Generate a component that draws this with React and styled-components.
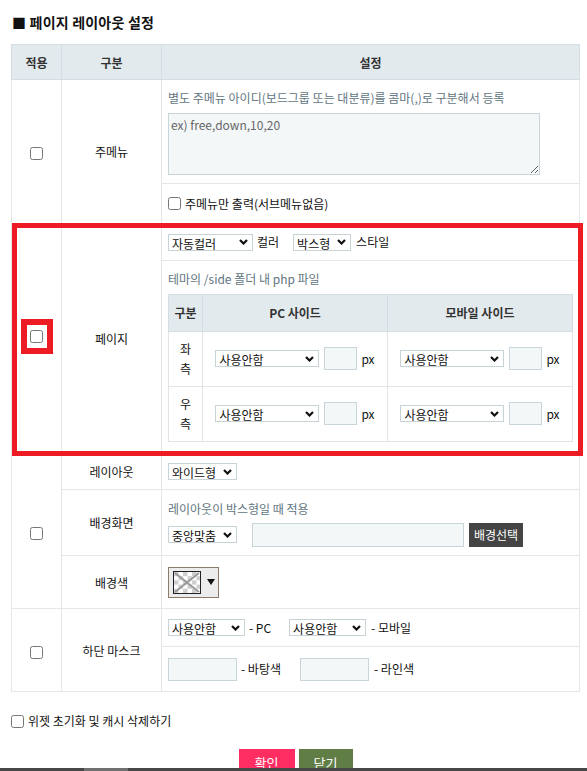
import React, { useLayoutEffect, useRef, useState } from "react";
import styled, { createGlobalStyle } from "styled-components";

const GlobalStyle = createGlobalStyle`
  html, body { margin: 0; padding: 0; background: #fff; }
  body {
    font-family: "Noto Sans CJK KR", "Noto Sans", sans-serif;
    font-size: 12px;
    color: #222;
  }
  * { box-sizing: border-box; }
`;

const Page = styled.div`
  padding: 0 7px 0 11px;
`;

const Title = styled.h2`
  margin: 0;
  padding: 12px 0 12px 1px;
  font-size: 14px;
  line-height: 20px;
  font-weight: 700;
  color: #111;
  letter-spacing: 0.2px;
`;

const TableWrap = styled.div`
  position: relative;
`;

const Table = styled.table`
  width: 100%;
  border-collapse: collapse;
  table-layout: fixed;
  border: 1px solid #e3e3e3;
`;

const Row = styled.tr`
  height: ${(p) => p.$h}px;
`;

const Th = styled.th`
  background: #e3eaee;
  border: 1px solid #d3dde2;
  font-weight: 700;
  font-size: 12px;
  color: #333;
  text-align: center;
`;

const CenterCell = styled.td`
  border: 1px solid #e6e6e6;
  text-align: center;
  vertical-align: middle;
  color: #111;
`;

const SetCell = styled.td`
  border: 1px solid #e6e6e6;
  text-align: left;
  vertical-align: middle;
  padding: 0 6px ${(p) => p.$pb || 0}px 6px;
`;

const Desc = styled.div`
  color: #5f7581;
  line-height: 20px;
  margin-bottom: ${(p) => p.$mb || 0}px;
`;

const Memo = styled.textarea`
  display: block;
  width: 372px;
  height: 62px;
  resize: vertical;
  background: #f3f7f8;
  border: 1px solid #c8d5da;
  font-family: "Noto Sans CJK KR", sans-serif;
  font-size: 12px;
  padding: 2px 2px;
  color: #555;
  outline: none;
  &::placeholder { color: #666; }
`;

const Line = styled.div`
  display: flex;
  align-items: center;
  line-height: 20px;
  color: #111;
`;

const Text = styled.span`
  margin: 0 ${(p) => p.$mr || 0}px 0 ${(p) => p.$ml || 0}px;
  white-space: nowrap;
`;

const Check = styled.input.attrs({ type: "checkbox" })`
  margin: 0;
  width: 13px;
  height: 13px;
  vertical-align: middle;
`;

const CheckLabel = styled.label`
  display: inline-flex;
  align-items: center;
  gap: 4px;
  color: #111;
  line-height: 20px;
`;

const Marked = styled.span`
  display: inline-flex;
  border: 6px solid #ed1c24;
  padding: 5px 4px 5px 3px;
  margin-bottom: 4px;
`;

const SelectBox = styled.span`
  position: relative;
  display: inline-block;
  flex: none;
  width: ${(p) => p.$w}px;
  height: 17px;
  margin-right: ${(p) => p.$mr || 0}px;
  vertical-align: middle;
`;

const SelectEl = styled.select`
  appearance: none;
  display: block;
  width: 100%;
  height: 100%;
  border: 1px solid #c8d3d8;
  border-radius: 0;
  background: #fff;
  font-family: "Noto Sans CJK KR", sans-serif;
  font-size: 12px;
  color: #111;
  padding: 0 14px 0 3px;
  outline: none;
`;

const Chevron = styled.svg`
  position: absolute;
  right: 5px;
  top: 50%;
  margin-top: -3px;
  pointer-events: none;
`;

const Select = ({ w, mr, options }) => (
  <SelectBox $w={w} $mr={mr}>
    <SelectEl defaultValue={options[0]}>
      {options.map((o) => (
        <option key={o}>{o}</option>
      ))}
    </SelectEl>
    <Chevron width="9" height="6" viewBox="0 0 9 6">
      <path d="M1 1 L4.5 4.5 L8 1" fill="none" stroke="#111" strokeWidth="2.2" />
    </Chevron>
  </SelectBox>
);

const Field = styled.input.attrs({ type: "text" })`
  flex: none;
  width: ${(p) => p.$w}px;
  height: ${(p) => p.$h || 23}px;
  margin: 0 ${(p) => p.$mr || 0}px 0 ${(p) => p.$ml || 0}px;
  background: #f3f7f8;
  border: 1px solid #c8d5da;
  outline: none;
`;

const DarkButton = styled.button`
  height: 24px;
  padding: 0 5px;
  margin-left: 5px;
  border: 0;
  background: #444;
  color: #fff;
  font-family: "Noto Sans CJK KR", sans-serif;
  font-size: 12px;
`;

const InnerTable = styled.table`
  width: 100%;
  border-collapse: collapse;
  table-layout: fixed;
`;

const InnerTh = styled.th`
  height: 37px;
  background: #e3eaee;
  border: 1px solid #d3dde2;
  font-weight: 700;
  color: #333;
  text-align: center;
`;

const InnerTd = styled.td`
  height: 55px;
  border: 1px solid #e3e3e3;
  text-align: center;
  line-height: 20px;
  color: #111;
`;

const SideBox = styled.div`
  display: inline-flex;
  align-items: center;
`;

const Picker = styled.div`
  display: inline-flex;
  align-items: center;
  width: 51px;
  height: 31px;
  padding: 0 0 0 4px;
  background: #ececec;
  border: 1px solid #8c7b6b;
  gap: 6px;
`;

const Widget = styled.div`
  margin-top: 19px;
`;

const Actions = styled.div`
  display: flex;
  justify-content: center;
  gap: 4px;
  margin-top: 18px;
`;

const ActionButton = styled.button`
  width: ${(p) => p.$w}px;
  height: 30px;
  border: 0;
  padding: 0 0 3px;
  background: ${(p) => p.$bg};
  color: #fff;
  font-family: "Noto Sans CJK KR", sans-serif;
  font-size: 13px;
`;

const Frame = styled.div`
  position: absolute;
  border: 5px solid #ed1c24;
  pointer-events: none;
`;

const BottomBar = styled.div`
  position: fixed;
  left: 0;
  right: 0;
  bottom: 0;
  height: 3px;
  background: #474747;
  &::after {
    content: "";
    position: absolute;
    left: 84px;
    width: 44px;
    top: 0;
    bottom: 0;
    background: #707070;
  }
`;

const useSel = ["사용안함", "사용함"];

export default function App() {
  const wrapRef = useRef(null);
  const groupRef = useRef(null);
  const [frame, setFrame] = useState(null);

  useLayoutEffect(() => {
    const w = wrapRef.current.getBoundingClientRect();
    const g = groupRef.current.getBoundingClientRect();
    setFrame({
      left: g.left - w.left,
      top: g.top - w.top - 1,
      width: g.width + 3,
      height: g.height + 3,
    });
  }, []);

  return (
    <Page>
      <GlobalStyle />
      <Title>■ 페이지 레이아웃 설정</Title>
      <TableWrap ref={wrapRef}>
        <Table>
          <colgroup>
            <col style={{ width: 50 }} />
            <col style={{ width: 100 }} />
            <col />
          </colgroup>
          <thead>
            <Row $h={35}>
              <Th>적용</Th>
              <Th>구분</Th>
              <Th>설정</Th>
            </Row>
          </thead>
          <tbody>
            <Row $h={104}>
              <CenterCell rowSpan={2}>
                <Check />
              </CenterCell>
              <CenterCell rowSpan={2}>주메뉴</CenterCell>
              <SetCell>
                <Desc $mb={5}>별도 주메뉴 아이디(보드그룹 또는 대분류)를 콤마(,)로 구분해서 등록</Desc>
                <Memo placeholder="ex) free,down,10,20" />
              </SetCell>
            </Row>
            <Row $h={40}>
              <SetCell>
                <CheckLabel>
                  <Check />
                  주메뉴만 출력(서브메뉴없음)
                </CheckLabel>
              </SetCell>
            </Row>
          </tbody>
          <tbody ref={groupRef}>
            <Row $h={37}>
              <CenterCell rowSpan={2}>
                <Marked>
                  <Check />
                </Marked>
              </CenterCell>
              <CenterCell rowSpan={2}>페이지</CenterCell>
              <SetCell>
                <Line>
                  <Select w={85} options={["자동컬러", "블랙", "화이트"]} />
                  <Text $ml={4} $mr={14}>컬러</Text>
                  <Select w={58} options={["박스형", "와이드형"]} />
                  <Text $ml={5}>스타일</Text>
                </Line>
              </SetCell>
            </Row>
            <Row $h={193}>
              <SetCell $pb={4}>
                <Desc $mb={5}>테마의 /side 폴더 내 php 파일</Desc>
                <InnerTable>
                  <colgroup>
                    <col style={{ width: 34 }} />
                    <col />
                    <col />
                  </colgroup>
                  <thead>
                    <tr>
                      <InnerTh>구분</InnerTh>
                      <InnerTh>PC 사이드</InnerTh>
                      <InnerTh>모바일 사이드</InnerTh>
                    </tr>
                  </thead>
                  <tbody>
                    {[["좌", "측"], ["우", "측"]].map(([a, b]) => (
                      <tr key={a}>
                        <InnerTd>
                          {a}
                          <br />
                          {b}
                        </InnerTd>
                        {[0, 1].map((i) => (
                          <InnerTd key={i}>
                            <SideBox>
                              <Select w={104} options={useSel} />
                              <Field $w={33} $ml={5} $mr={4} />
                              <Text>px</Text>
                            </SideBox>
                          </InnerTd>
                        ))}
                      </tr>
                    ))}
                  </tbody>
                </InnerTable>
              </SetCell>
            </Row>
          </tbody>
          <tbody>
            <Row $h={36}>
              <CenterCell rowSpan={3}>
                <Check />
              </CenterCell>
              <CenterCell>레이아웃</CenterCell>
              <SetCell>
                <Line>
                  <Select w={69} options={["와이드형", "박스형"]} />
                </Line>
              </SetCell>
            </Row>
            <Row $h={66}>
              <CenterCell>배경화면</CenterCell>
              <SetCell>
                <Desc $mb={4}>레이아웃이 박스형일 때 적용</Desc>
                <Line>
                  <Select w={69} options={["중앙맞춤", "상단맞춤"]} />
                  <Field $w={212} $h={24} $ml={15} />
                  <DarkButton>배경선택</DarkButton>
                </Line>
              </SetCell>
            </Row>
            <Row $h={53}>
              <CenterCell>배경색</CenterCell>
              <SetCell>
                <Picker>
                  <svg width="28" height="23" viewBox="0 0 28 23">
                    <rect x="0.5" y="0.5" width="27" height="22" fill="#fff" stroke="#222" />
                    {[0, 1, 2, 3, 4].map((r) =>
                      [0, 1, 2, 3, 4, 5].map((c) =>
                        (r + c) % 2 === 0 ? (
                          <rect key={`${r}-${c}`} x={1 + c * 4.5} y={1 + r * 4.2} width="4.5" height="4.2" fill="#cfcfcf" />
                        ) : null
                      )
                    )}
                    <path d="M2 2 L26 21 M26 2 L2 21" stroke="#9a9a9a" strokeWidth="2" />
                    <rect x="0.5" y="0.5" width="27" height="22" fill="none" stroke="#222" />
                  </svg>
                  <svg width="8" height="6" viewBox="0 0 8 6">
                    <path d="M0 0 H8 L4 6 Z" fill="#111" />
                  </svg>
                </Picker>
              </SetCell>
            </Row>
          </tbody>
          <tbody>
            <Row $h={38}>
              <CenterCell rowSpan={2}>
                <Check />
              </CenterCell>
              <CenterCell rowSpan={2}>하단 마스크</CenterCell>
              <SetCell>
                <Line>
                  <Select w={77} options={useSel} />
                  <Text $ml={4} $mr={18}>- PC</Text>
                  <Select w={77} options={useSel} />
                  <Text $ml={5}>- 모바일</Text>
                </Line>
              </SetCell>
            </Row>
            <Row $h={45}>
              <SetCell>
                <Line>
                  <Field $w={69} $mr={4} />
                  <Text $mr={19}>- 바탕색</Text>
                  <Field $w={69} $mr={5} />
                  <Text>- 라인색</Text>
                </Line>
              </SetCell>
            </Row>
          </tbody>
        </Table>
        {frame && (
          <Frame
            style={{
              left: frame.left,
              top: frame.top,
              width: frame.width,
              height: frame.height,
            }}
          />
        )}
      </TableWrap>
      <Widget>
        <CheckLabel>
          <Check />
          위젯 초기화 및 캐시 삭제하기
        </CheckLabel>
      </Widget>
      <Actions>
        <ActionButton $w={56} $bg="#ff2d62">확인</ActionButton>
        <ActionButton $w={54} $bg="#607d46">닫기</ActionButton>
      </Actions>
      <BottomBar />
    </Page>
  );
}
